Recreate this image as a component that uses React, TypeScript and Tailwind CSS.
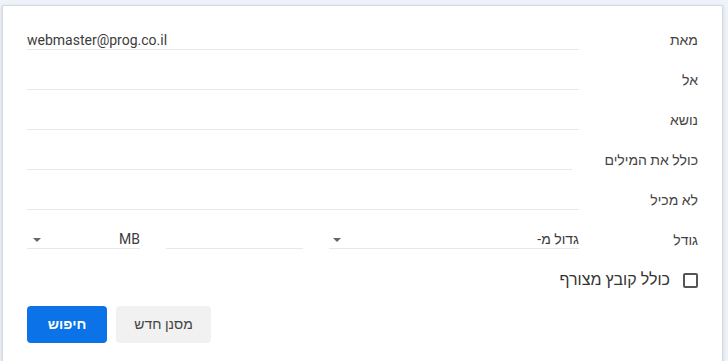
import React from 'react'

const FONT = { fontFamily: 'Roboto, "Liberation Sans", Arial, sans-serif' }

function Arrow() {
  return (
    <svg width="8" height="4" viewBox="0 0 8 4" className="shrink-0">
      <path d="M0 0h8L4 4z" fill="#666" />
    </svg>
  )
}

function FieldRow({ label, value, inset }: { label: string; value?: string; inset?: boolean }) {
  return (
    <div className="flex h-10 items-center">
      <div className="w-[119px] shrink-0 text-[14px] text-[#444]">{label}</div>
      <div className={`flex-1 ${inset ? 'mr-[7px]' : ''}`}>
        <input
          dir="ltr"
          defaultValue={value ?? ''}
          className="mt-[1px] box-content block h-[17px] w-full border-b border-[#e6e8ec] bg-transparent p-0 text-[14px] text-[#3c3c3c] outline-none"
        />
      </div>
    </div>
  )
}

export default function App() {
  return (
    <div className="h-[361px] w-[728px] overflow-hidden bg-[#eef2f9] pl-[2px] pr-[5px] pt-[5px]" style={FONT}>
      <div dir="rtl" className="h-[370px] border border-[#d6d9de] bg-white pl-[24px] pr-[24px] pt-[14px] shadow-[0_1px_3px_rgba(0,0,0,0.15)]">
        <FieldRow label="מאת" value="webmaster@prog.co.il" />
        <FieldRow label="אל" />
        <FieldRow label="נושא" />
        <FieldRow label="כולל את המילים" inset />
        <FieldRow label="לא מכיל" />

        {/* size row */}
        <div className="flex h-10 items-center">
          <div className="w-[119px] shrink-0 text-[14px] text-[#444]">גודל</div>
          <div className="flex flex-1 items-end gap-[26px]">
            <div className="flex h-[18px] w-[250px] items-center justify-between border-b border-[#e6e8ec] pl-[4px] text-[14px] text-[#3c3c3c]">
              <span>גדול מ-</span>
              <Arrow />
            </div>
            <div className="h-[18px] w-[137px] border-b border-[#e6e8ec]" />
            <div className="flex h-[18px] flex-1 items-center justify-between border-b border-[#e6e8ec] pl-[6px] text-[14px] text-[#3c3c3c]">
              <span>MB</span>
              <Arrow />
            </div>
          </div>
        </div>

        {/* attachment */}
        <div className="flex h-10 items-center">
          <div className="ml-[13px] h-[15px] w-[15px] rounded-[2px] border-2 border-[#555]" />
          <span className="text-[16px] text-[#333]">כולל קובץ מצורף</span>
        </div>

        <div className="mt-[6px] flex justify-end gap-[9px]">
          <button className="h-[37px] w-[95px] rounded-[4px] bg-[#f1f1f1] text-[14px] font-medium text-[#444]">
            מסנן חדש
          </button>
          <button className="h-[37px] w-[80px] rounded-[4px] bg-[#0b72e7] text-[14px] font-bold text-white">
            חיפוש
          </button>
        </div>
      </div>
    </div>
  )
}
